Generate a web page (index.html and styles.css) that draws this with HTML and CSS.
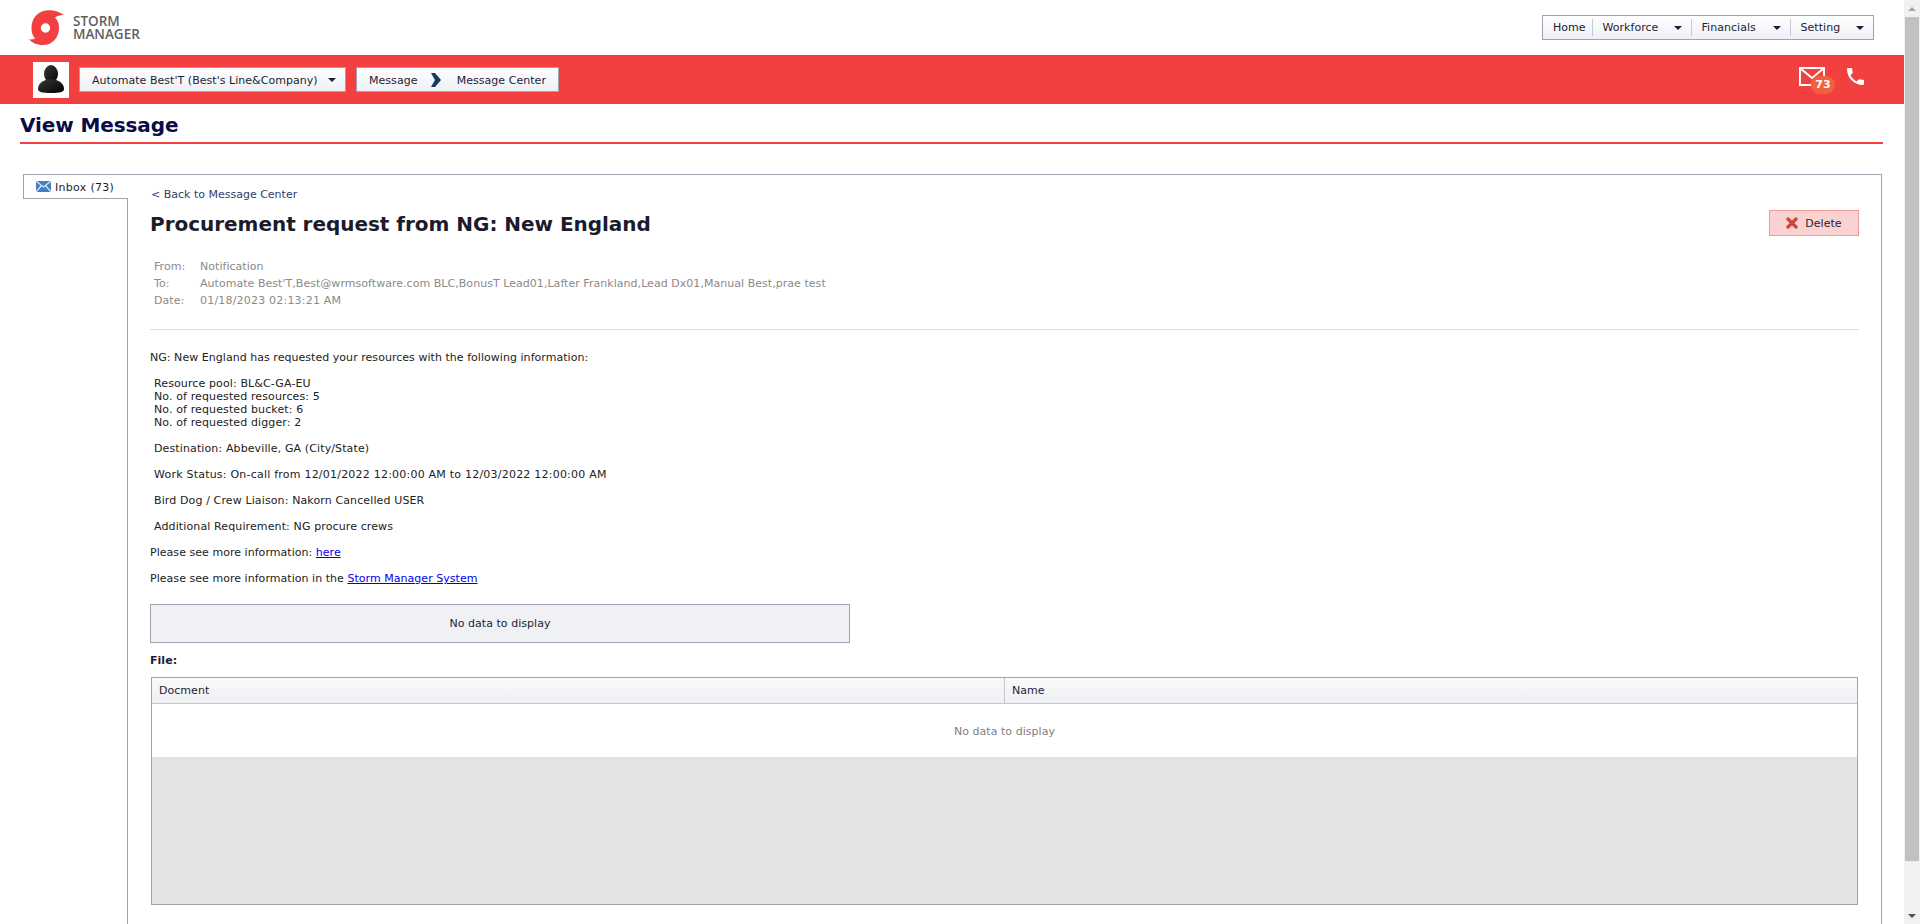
FILE: index.html
```html
<!DOCTYPE html>
<html>

<head>
  <meta charset="utf-8">
  <title>View Message</title>
  <link rel="stylesheet" href="styles.css">
</head>

<body>
  <div class="page">
    <div class="top">
      <div class="brand">
        <svg class="logo" viewBox="0 0 36 36">
          <path fill="#f24040" fill-rule="evenodd" d="M35 5C29 .5 20-1 13 1.500 6 4 2.500 11 2.500 18c0 4 1 7.500 3.500 10.500-2 1-4 1-6 .8C3 33 9 35.500 15 35c9-.5 15-8 15-17 0-4.500-1.500-8-4-10.500C29 5.500 32 5 35 5zM16.500 13.300a4.700 4.700 0 1 1 0 9.400 4.700 4.700 0 0 1 0-9.400z"/>
        </svg>
        <div class="brand-name">
          <div class="brand-line">STORM</div>
          <div class="brand-line">MANAGER</div>
        </div>
      </div>
      <div class="nav">
        <div class="nav-item nav-home">Home</div>
        <div class="nav-item">Workforce <span class="caret"></span></div>
        <div class="nav-item">Financials <span class="caret"></span></div>
        <div class="nav-item nav-last">Setting <span class="caret"></span></div>
      </div>
    </div>

    <div class="redbar">
      <div class="avatar">
        <svg viewBox="0 0 36 36" width="36" height="36">
          <defs>
            <linearGradient id="personFill" x1="0" y1="0" x2="1" y2="1">
              <stop offset="0" stop-color="#3a3a3a"/>
              <stop offset="1" stop-color="#000"/>
            </linearGradient>
          </defs>
          <ellipse cx="18" cy="12" rx="7" ry="9" fill="url(#personFill)"/>
          <path fill="url(#personFill)" d="M5 27c0-5 4-8 9-9.500h8c5 1.500 9 4.500 9 9.500 0 3-4 4-13 4s-13-1-13-4z"/>
        </svg>
      </div>
      <div class="pick pick-user">Automate Best'T (Best's Line&amp;Company) <span class="caret"></span></div>
      <div class="pick pick-crumb">
        <span>Message</span>
        <svg class="chevron" viewBox="0 0 10 14"><path fill="#123a66" d="M0 0h4l6 7-6 7H0l4-7z"/></svg>
        <span>Message Center</span>
      </div>
      <div class="bar-icons">
        <div class="mail">
          <svg viewBox="0 0 26 20" width="26" height="20">
            <rect x="1" y="1" width="24" height="17" fill="none" stroke="#fff" stroke-width="2"/>
            <path d="M1.500 1.500 13 11 24.500 1.500" fill="none" stroke="#fff" stroke-width="2"/>
          </svg>
          <span class="badge">73</span>
        </div>
        <svg class="phone" viewBox="3 3 18 18" width="17" height="17">
          <path fill="#fff" d="M6.620 10.790c1.440 2.830 3.760 5.140 6.590 6.590l2.200-2.200c.27-.27.67-.36 1.020-.24 1.120.37 2.330.57 3.570.57.550 0 1 .45 1 1V20c0 .55-.45 1-1 1-9.390 0-17-7.610-17-17 0-.55.45-1 1-1h3.500c.55 0 1 .45 1 1 0 1.250.2 2.450.57 3.570.11.35.03.74-.25 1.020l-2.200 2.200z"/>
        </svg>
      </div>
    </div>

    <h1 class="view-title">View Message</h1>

    <div class="box">
      <div class="side">
        <div class="tab">
          <svg viewBox="0 0 15 11" width="15" height="11">
            <rect width="15" height="11" fill="#3f7fc4"/>
            <path d="M0 0l7.500 6L15 0M0 11l5.500-6.500M15 11L9.500 4.500" fill="none" stroke="#dfeaf6" stroke-width="1.200"/>
          </svg>
          Inbox (73)
        </div>
      </div>

      <div class="main">
        <div class="back">&lt; Back to Message Center</div>
        <div class="subject-row">
          <h2 class="subject">Procurement request from NG: New England</h2>
          <div class="delete">
            <svg viewBox="0 0 12 12" width="12" height="12">
              <path d="M2 2l8 8M10 2l-8 8" stroke="#c9483c" stroke-width="3.400" stroke-linecap="round"/>
            </svg>
            Delete
          </div>
        </div>

        <div class="meta">
          <div class="meta-row"><span class="meta-key">From:</span>Notification</div>
          <div class="meta-row"><span class="meta-key">To:</span>Automate Best'T,Best@wrmsoftware.com BLC,BonusT Lead01,Lafter Frankland,Lead Dx01,Manual Best,prae test</div>
          <div class="meta-row meta-date"><span class="meta-key">Date:</span>01/18/2023 02:13:21 AM</div>
        </div>

        <hr class="line">

        <div class="msg">
          <p>NG: New England has requested your resources with the following information:</p>
          <p class="indent">Resource pool: BL&amp;C-GA-EU<br>No. of requested resources: 5<br>No. of requested bucket: 6<br>No. of requested digger: 2</p>
          <p class="indent">Destination: Abbeville, GA (City/State)</p>
          <p class="indent wide">Work Status: On-call from 12/01/2022 12:00:00 AM to 12/03/2022 12:00:00 AM</p>
          <p class="indent">Bird Dog / Crew Liaison: Nakorn Cancelled USER</p>
          <p class="indent">Additional Requirement: NG procure crews</p>
          <p>Please see more information: <a href="#">here</a></p>
          <p>Please see more information in the <a href="#">Storm Manager System</a></p>
        </div>

        <div class="nodata">No data to display</div>

        <div class="file-label">File:</div>

        <div class="grid">
          <div class="grid-head">
            <div class="col col-doc">Docment</div>
            <div class="col">Name</div>
          </div>
          <div class="grid-empty">No data to display</div>
          <div class="grid-rest"></div>
        </div>
      </div>
    </div>
  </div>

  <div class="scrollbar">
    <div class="sb-btn"><span class="sb-up"></span></div>
    <div class="sb-thumb"></div>
    <div class="sb-track"></div>
    <div class="sb-btn"><span class="sb-down"></span></div>
  </div>
</body>

</html>
```

FILE: styles.css
```css
html, body {
  height: 924px;
  overflow: hidden;
}

body {
  margin: 0;
  display: flex;
  font-family: "DejaVu Sans", sans-serif;
  font-size: 11px;
  line-height: 13px;
  letter-spacing: 0.04px;
  color: #1d1d33;
  background: #fff;
}

.page {
  flex: 1;
  min-width: 0;
}

/* top strip */
.top {
  height: 55px;
  display: flex;
  justify-content: space-between;
  padding: 0 30px 0 29px;
  box-sizing: border-box;
}

.brand {
  display: flex;
  padding-top: 10px;
}

.logo {
  width: 36px;
  height: 36px;
}

.brand-name {
  margin: 5px 0 0 8px;
  font-family: "Open Sans", sans-serif;
  font-size: 13.5px;
  font-weight: 600;
  letter-spacing: 0;
  color: #5f6062;
}

.brand-line {
  height: 13px;
  line-height: 13px;
}

.nav {
  margin-top: 15px;
  height: 25px;
  display: flex;
  align-items: center;
  box-sizing: border-box;
  border: 1px solid #a0a2b0;
  background: linear-gradient(#fff, #eef0f5);
}

.nav-item {
  width: 99px;
  height: 17px;
  padding: 0 9px 0 9.5px;
  box-sizing: border-box;
  display: flex;
  align-items: center;
  justify-content: space-between;
  border-right: 1px solid #c9cbd3;
}

.nav-home {
  width: 50px;
  padding-left: 10px;
}

.nav-last {
  width: 82px;
  border-right: none;
}

.caret {
  display: inline-block;
  width: 0;
  height: 0;
  border-left: 4px solid transparent;
  border-right: 4px solid transparent;
  border-top: 4px solid #1d1d33;
}

/* red bar */
.redbar {
  height: 49px;
  background: #f24040;
  display: flex;
  align-items: center;
  padding-left: 33px;
}

.avatar {
  width: 36px;
  height: 36px;
  background: #fff;
  margin-right: 10px;
}

.pick {
  height: 25px;
  padding-top: 1px;
  box-sizing: border-box;
  display: flex;
  align-items: center;
  border: 1px solid #a0a2b0;
  background: linear-gradient(#fff, #eef0f5);
}

.pick-user {
  width: 267px;
  padding-left: 12px;
  padding-right: 9px;
  justify-content: space-between;
  margin-right: 10px;
}

.pick-crumb {
  width: 203px;
  padding-left: 12px;
  padding-right: 12px;
  justify-content: space-between;
}

.chevron {
  width: 10px;
  height: 14px;
  margin-left: -2px;
}

.bar-icons {
  margin-left: auto;
  margin-right: 40px;
  margin-bottom: 7px;
  display: flex;
  align-items: flex-start;
  gap: 22px;
}

.mail {
  position: relative;
  width: 26px;
  height: 20px;
  margin-top: 2px;
}

.badge {
  position: absolute;
  left: 12px;
  top: 9px;
  width: 24px;
  height: 18px;
  border-radius: 9px;
  background: #f0623f;
  color: #fff;
  font-size: 11px;
  line-height: 18px;
  font-weight: bold;
  text-align: center;
}

.phone {
  margin-top: 3px;
}

/* page title */
.view-title {
  margin: 9px 21px 0 20px;
  height: 29px;
  border-bottom: 2px solid #f24040;
  font-size: 20px;
  line-height: 24px;
  font-weight: bold;
  letter-spacing: -0.1px;
  color: #0b0b45;
}

/* message box */
.box {
  margin: 30px 22px 0 23px;
  display: flex;
  border-top: 1px solid #a0a2b0;
  border-right: 1px solid #a0a2b0;
}

.side {
  width: 105px;
  flex: none;
  box-sizing: border-box;
  border-right: 1px solid #a0a2b0;
  position: relative;
}

.tab {
  position: relative;
  width: 105px;
  height: 25px;
  box-sizing: border-box;
  margin-top: -1px;
  padding: 6px 0 0 12px;
  border: 1px solid #a0a2b0;
  border-right: none;
  background: #fff;
  display: flex;
  align-items: flex-start;
  gap: 4px;
  letter-spacing: 0.3px;
}

.main {
  flex: 1;
  min-width: 0;
  padding: 13px 22px 60px 22px;
}

.back {
  line-height: 14px;
  padding-left: 1px;
  letter-spacing: 0;
  color: #30406a;
}

.subject-row {
  margin-top: 8px;
  height: 26px;
  display: flex;
  justify-content: space-between;
  align-items: center;
}

.subject {
  margin: 2px 0 0;
  font-size: 20px;
  line-height: 24px;
  font-weight: bold;
  letter-spacing: -0.03px;
  color: #1b1b2b;
}

.delete {
  width: 90px;
  height: 26px;
  box-sizing: border-box;
  border: 1px solid #ee9a9a;
  background: #fbd2d2;
  display: flex;
  align-items: center;
  justify-content: center;
  gap: 7px;
}

.meta {
  margin-top: 22px;
  color: #8a8a8a;
}

.meta-row {
  height: 17px;
  line-height: 17px;
  padding-left: 4px;
  display: flex;
}

.meta-date {
  letter-spacing: 0.2px;
}

.meta-key {
  width: 46px;
  flex: none;
  letter-spacing: 0.04px;
}

.line {
  margin: 20px 0 0;
  border: none;
  border-top: 1px solid #dcdcdc;
}

.msg {
  margin-top: 21px;
  color: #222;
}

.msg p {
  margin: 0 0 13px;
}

.msg .indent {
  padding-left: 4px;
  letter-spacing: 0.12px;
}

.msg .wide {
  letter-spacing: 0.22px;
}

.msg a {
  color: #0000ee;
  text-decoration: underline;
}

.nodata {
  width: 700px;
  height: 39px;
  margin-top: 19px;
  box-sizing: border-box;
  border: 1px solid #a0a2b0;
  background: #f0f1f5;
  display: flex;
  align-items: center;
  justify-content: center;
}

.file-label {
  margin-top: 11px;
  font-weight: bold;
}

.grid {
  margin: 10px 1px 0;
  border: 1px solid #a0a2b0;
}

.grid-head {
  height: 26px;
  box-sizing: border-box;
  display: flex;
  border-bottom: 1px solid #c4c5cf;
  background: linear-gradient(#f9f9fa, #f0f1f4);
}

.col {
  flex: 1;
  padding-left: 7px;
  line-height: 25px;
}

.col-doc {
  flex: none;
  width: 853px;
  box-sizing: border-box;
  border-right: 1px solid #c4c5cf;
}

.grid-empty {
  height: 53px;
  box-sizing: border-box;
  padding-top: 2px;
  display: flex;
  align-items: center;
  justify-content: center;
  color: #808080;
}

.grid-rest {
  height: 147px;
  background: #e4e4e4;
}

/* drawn page scrollbar */
.scrollbar {
  width: 16px;
  flex: none;
  height: 924px;
  display: flex;
  flex-direction: column;
  background: #f1f1f1;
}

.sb-btn {
  height: 17px;
  flex: none;
  display: flex;
  align-items: center;
  justify-content: center;
}

.sb-up {
  border-left: 4px solid transparent;
  border-right: 4px solid transparent;
  border-bottom: 4px solid #a3a3a3;
}

.sb-down {
  border-left: 4px solid transparent;
  border-right: 4px solid transparent;
  border-top: 4px solid #505050;
}

.sb-thumb {
  height: 844px;
  margin: 0 1px;
  flex: none;
  background: #c1c1c1;
}

.sb-track {
  flex: 1;
}
```
